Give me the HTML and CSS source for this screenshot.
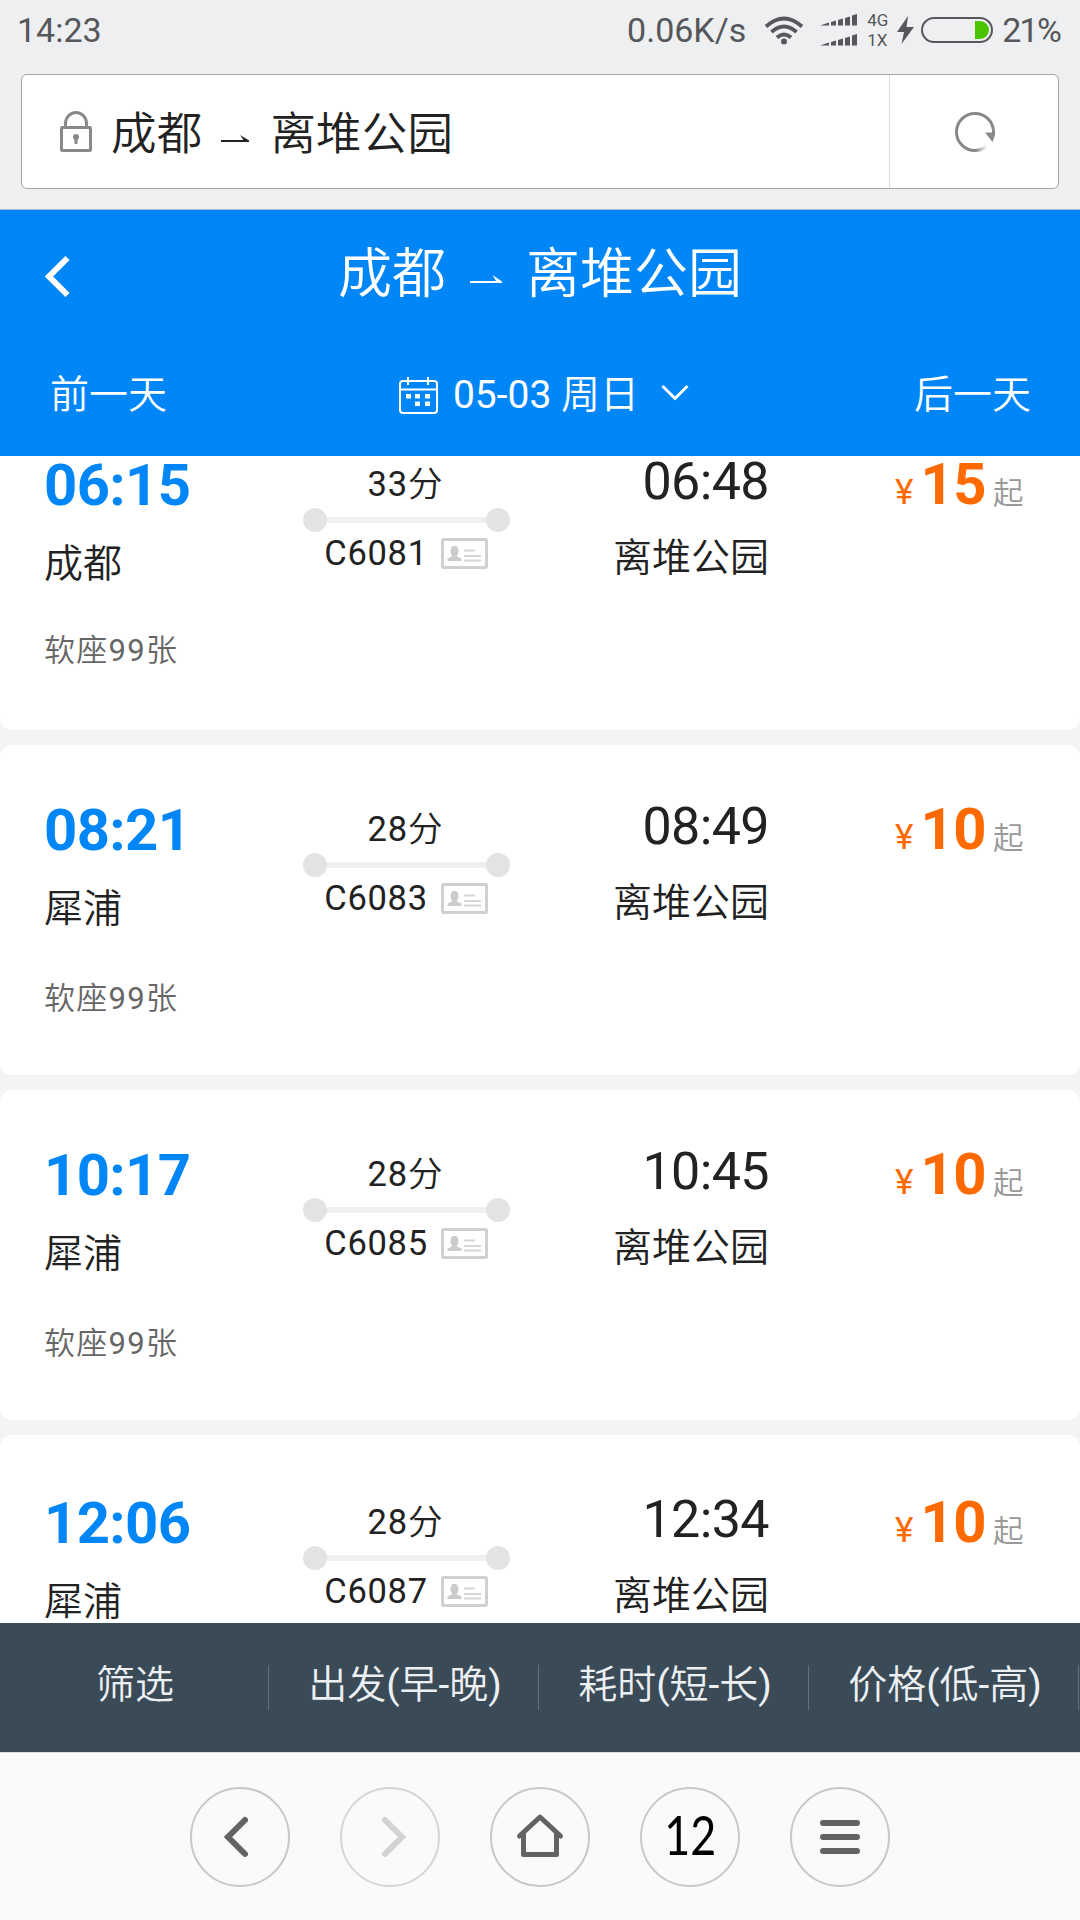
FILE: index.html
```html
<!DOCTYPE html>
<html lang="zh-CN">
<head>
<meta charset="utf-8">
<title>成都 - 离堆公园</title>
<link rel="stylesheet" href="styles.css">
</head>
<body>
<div class="screen">
  <header class="status">
    <span class="clock">14:23</span>
    <div class="status-right">
      <span class="speed">0.06K/s</span>
      <svg class="wifi" width="40" height="29" viewBox="0 0 40 29" fill="none" stroke="#55575a" stroke-width="4"><path d="M2 10.500Q20 -5.500 38 10.500M7.500 16Q20 5 32.500 16M13 21.500Q20 15.500 27 21.500"/><circle cx="20" cy="25.500" r="3" fill="#55575a" stroke="none"/></svg>
      <svg class="signal" width="38" height="34" viewBox="0 0 38 34" fill="#55575a"><path d="M0 11.500L9 8.500V11.500ZM11 8L16 6.500V11.500H11ZM18 6L23 4.500V11.500H18ZM25 4L30 2.500V11.500H25ZM32 1.500L37 0V11.500H32Z"/><path d="M0 31.500L9 28.500V31.500ZM11 28L16 26.500V31.500H11ZM18 26L23 24.500V31.500H18ZM25 24L30 22.500V31.500H25ZM32 21.500L37 20V31.500H32Z"/></svg>
      <div class="net"><span>4G</span><span>1X</span></div>
      <svg class="bolt" width="17" height="28" viewBox="0 0 17 28" fill="#55575a"><path d="M11 0L0 16H7L4.500 28L17 11H9.500Z"/></svg>
      <svg class="battery" width="72" height="26" viewBox="0 0 72 26"><rect x="1" y="1" width="70" height="24" rx="12" fill="none" stroke="#55575a" stroke-width="2"/><path d="M54 4H59A9 9 0 0 1 59 22H54Z" fill="#4bc400"/></svg>
      <span class="percent">21%</span>
    </div>
  </header>

  <div class="address">
    <div class="address-main">
      <svg class="lock" width="32" height="41" viewBox="0 0 32 41" fill="none" stroke="#898989" stroke-width="3"><rect x="1.500" y="16.500" width="29" height="23" rx="1"/><path d="M5.500 16V12.500A10.500 11 0 0 1 26.500 12.500V16"/><g fill="#898989" stroke="none"><circle cx="16" cy="26" r="3"/><rect x="14.500" y="27" width="3" height="6"/></g></svg>
      <span class="place">成都</span>
      <svg class="arrow-s" width="28" height="8" viewBox="0 0 28 8"><path d="M0 5H22.500L19 0L28 5.500V7H0Z" fill="#222"/></svg>
      <span class="place">离堆公园</span>
    </div>
    <div class="address-reload">
      <svg width="42" height="42" viewBox="0 0 42 42"><defs><linearGradient id="fade" gradientUnits="userSpaceOnUse" x1="22" y1="0" x2="33" y2="0"><stop stop-color="#898989"/><stop offset="1" stop-color="#898989" stop-opacity="0"/></linearGradient></defs><path d="M21 39.500A18.500 18.500 0 1 1 39.500 21V24" fill="none" stroke="#898989" stroke-width="3"/><path d="M21 39.500A18.500 18.500 0 0 0 33 35" fill="none" stroke="url(#fade)" stroke-width="3"/><path d="M31 21.500H41V24L38.500 31Z" fill="#898989"/></svg>
    </div>
  </div>

  <section class="head">
    <div class="title-row">
      <svg class="back" width="26" height="43" viewBox="0 0 26 43"><path d="M22.500 3L4 21.500L22.500 40" fill="none" stroke="#fff" stroke-width="6"/></svg>
      <h1 class="title"><span>成都</span><svg class="arrow-l" width="32" height="9" viewBox="0 0 32 9"><path d="M0 6H26L22.500 0L32 6.500V8H0Z" fill="#fff"/></svg><span>离堆公园</span></h1>
    </div>
    <div class="date-row">
      <span class="day">前一天</span>
      <div class="date">
        <svg class="cal" width="39" height="37" viewBox="0 0 39 37" fill="none" stroke="#fff" stroke-width="2"><rect x="1" y="4" width="37" height="32" rx="3"/><path d="M1 12.500H38M9 0V8M29 0V8"/><g fill="#fff" stroke="none"><path d="M7 17h5v4.500h-5zM16 17h5v4.500h-5zM26 17h5v4.500h-5zM16 24.500h5v4.500h-5zM26 24.500h5v4.500h-5z"/></g></svg>
        <span class="date-text">05-03 周日</span>
        <svg class="down" width="28" height="18" viewBox="0 0 28 18"><path d="M1.500 2L14 14.500L26.500 2" fill="none" stroke="#fff" stroke-width="3"/></svg>
      </div>
      <span class="day">后一天</span>
    </div>
  </section>

  <main class="list">
    <article class="card card-first">
      <div class="from"><b class="time">06:15</b><span class="station">成都</span></div>
      <div class="trip"><span class="dur">33分</span><div class="track"><i></i><u></u><i></i></div><div class="train"><span>C6081</span><svg class="idcard" width="47" height="31" viewBox="0 0 47 31"><use href="#idcard"/></svg></div></div>
      <div class="to"><span class="arrive">06:48</span><span class="station">离堆公园</span></div>
      <div class="price"><span class="yen">¥</span><b>15</b><span class="qi">起</span></div>
      <div class="seats">软座99张</div>
    </article>
    <article class="card">
      <div class="from"><b class="time">08:21</b><span class="station">犀浦</span></div>
      <div class="trip"><span class="dur">28分</span><div class="track"><i></i><u></u><i></i></div><div class="train"><span>C6083</span><svg class="idcard" width="47" height="31" viewBox="0 0 47 31"><use href="#idcard"/></svg></div></div>
      <div class="to"><span class="arrive">08:49</span><span class="station">离堆公园</span></div>
      <div class="price"><span class="yen">¥</span><b>10</b><span class="qi">起</span></div>
      <div class="seats">软座99张</div>
    </article>
    <article class="card">
      <div class="from"><b class="time">10:17</b><span class="station">犀浦</span></div>
      <div class="trip"><span class="dur">28分</span><div class="track"><i></i><u></u><i></i></div><div class="train"><span>C6085</span><svg class="idcard" width="47" height="31" viewBox="0 0 47 31"><use href="#idcard"/></svg></div></div>
      <div class="to"><span class="arrive">10:45</span><span class="station">离堆公园</span></div>
      <div class="price"><span class="yen">¥</span><b>10</b><span class="qi">起</span></div>
      <div class="seats">软座99张</div>
    </article>
    <article class="card card-last">
      <div class="from"><b class="time">12:06</b><span class="station">犀浦</span></div>
      <div class="trip"><span class="dur">28分</span><div class="track"><i></i><u></u><i></i></div><div class="train"><span>C6087</span><svg class="idcard" width="47" height="31" viewBox="0 0 47 31"><use href="#idcard"/></svg></div></div>
      <div class="to"><span class="arrive">12:34</span><span class="station">离堆公园</span></div>
      <div class="price"><span class="yen">¥</span><b>10</b><span class="qi">起</span></div>
    </article>
  </main>

  <nav class="filters">
    <span>筛选</span><span>出发(早-晚)</span><span>耗时(短-长)</span><span>价格(低-高)</span>
  </nav>

  <footer class="toolbar">
    <div class="round"><svg width="100" height="100" viewBox="0 0 100 100"><path d="M55 33L38 50L55 67" fill="none" stroke="#636363" stroke-width="6" stroke-linecap="round"/></svg></div>
    <div class="round round-off"><svg width="100" height="100" viewBox="0 0 100 100"><path d="M45 33L62 50L45 67" fill="none" stroke="#d3d3d3" stroke-width="6" stroke-linecap="round"/></svg></div>
    <div class="round"><svg width="100" height="100" viewBox="0 0 100 100" fill="none" stroke="#636363" stroke-width="5" stroke-linejoin="round" stroke-linecap="round"><path d="M29.500 49L50 30L70.500 49M33.500 47V67.500H66.500V47"/></svg></div>
    <div class="round"><span class="tabs">12</span></div>
    <div class="round"><svg width="100" height="100" viewBox="0 0 100 100"><path d="M33 36H67M33 50H67M33 64H67" stroke="#636363" stroke-width="6" stroke-linecap="round"/></svg></div>
  </footer>
</div>
<svg class="defs" width="0" height="0"><defs><g id="idcard"><rect x="1.500" y="1.500" width="44" height="28" rx="1" fill="none" stroke="#d0d0d0" stroke-width="3"/><path d="M13.500 8c3 0 4 2 4 5s-1 3-1.500 4.500v1l4.500 2v2.500h-14v-2.500l4.500-2v-1c-.5-1.500-1.500-1.500-1.500-4.500s1-5 4-5z" fill="#ccc"/><path d="M23 12.500h11M23 18h17M23 22.500h17" stroke="#d6d6d6" stroke-width="2"/></g></defs></svg>
</body>
</html>
```
FILE: styles.css
```css
* { box-sizing: border-box; }
body { margin: 0; font-family: Roboto, "Noto Sans CJK SC DemiLight", "Noto Sans CJK SC", sans-serif; color: #222; }
svg { display: block; flex: none; }
.defs { position: absolute; }
.screen { width: 1080px; height: 1920px; display: flex; flex-direction: column; overflow: hidden; background: #eeeff1; white-space: nowrap; }

.status { height: 74px; flex: none; display: flex; justify-content: space-between; padding: 9px 20px 0 17px; color: #55575a; font-size: 34px; line-height: 43px; }
.clock { letter-spacing: 0; }
.status-right { display: flex; align-items: flex-start; }
.speed { margin-right: 18px; }
.wifi { margin: 7px 16px 0 0; }
.signal { margin: 5px 9px 0 0; }
.net { display: flex; flex-direction: column; width: 21px; margin: 1px 9px 0 0; font-size: 17px; line-height: 20px; }
.bolt { margin: 7px 7px 0 0; }
.battery { margin: 8px 9px 0 0; }
.percent { letter-spacing: -1.8px; }

.address { height: 115px; flex: none; margin: 0 21px; display: flex; background: #fff; border: 1px solid #a3a5a7; border-radius: 6px; }
.address-main { width: 868px; display: flex; align-items: center; padding-left: 38px; border-right: 1px solid #dcdddf; font-size: 45.5px; color: #222; }
.place { padding-bottom: 3px; letter-spacing: 0.2px; }
.lock { margin-right: 19px; }
.arrow-s { margin: 14px 21px 0 19px; }
.address-reload { flex: 1; display: flex; align-items: center; justify-content: center; padding-left: 2px; }

.head { height: 247px; flex: none; margin-top: 20px; border-top: 1px solid #a9b9c9; background: #0086f6; color: #fff; }
.title-row { height: 127px; display: flex; align-items: center; padding-left: 45px; }
.back { margin-top: 5px; }
.title { display: flex; align-items: center; margin: 0 0 0 267px; padding-bottom: 9px; font-size: 54px; font-weight: 400; }
.arrow-l { margin: 20px 24px 0 24px; }
.date-row { display: flex; align-items: center; justify-content: space-between; padding: 0 49px 0 50px; height: 112px; font-size: 39px; }
.day { padding-bottom: 4px; }
.date { display: flex; align-items: center; padding-left: 7px; }
.cal { margin-top: 4px; }
.date-text { margin: 0 22px 0 15px; padding-bottom: 4px; }

.list { height: 1167px; flex: none; display: flex; flex-direction: column; gap: 15px; overflow: hidden; background: #f4f4f4; }
.card { height: 330px; flex: none; background: #fff; border-radius: 12px; padding: 56px 50px 0 44px; display: grid; grid-template-columns: 259px 207px 259px 1fr; grid-template-rows: 172px 60px; }
/* the list is scrolled, so the first card starts under the header */
.card-first { margin-top: -56px; grid-template-rows: 169px 60px; }
.card-last { padding-top: 59px; }
.from, .to { display: flex; flex-direction: column; gap: 25px; }
.time { font-size: 58px; line-height: 58px; color: #0086f6; letter-spacing: -0.6px; }
.station { font-size: 39px; line-height: 50px; }
.trip { display: flex; flex-direction: column; align-items: center; padding-top: 5px; }
.dur { font-size: 34.5px; line-height: 47px; letter-spacing: 0.9px; margin-right: 2px; }
.track { display: flex; align-items: center; }
.track i { width: 24px; height: 24px; border-radius: 50%; background: #e3e3e3; }
.track u { width: 159px; height: 6px; background: #efefef; }
.train { display: flex; align-items: center; gap: 13px; margin: 1px 1px 0 0; font-size: 34.5px; letter-spacing: 0.7px; }
.to { align-items: flex-end; }
.arrive { font-size: 52px; line-height: 52px; letter-spacing: -0.6px; }
.price { display: flex; align-items: baseline; padding-left: 126px; line-height: 57px; color: #ff6a00; }
.price b { font-size: 58px; letter-spacing: -0.5px; margin: 0 7px 0 7px; }
.yen { font-size: 35px; }
.qi { font-size: 30.5px; color: #999; }
.seats { grid-column: 1 / -1; font-size: 31px; letter-spacing: 1.3px; color: #666; }

.filters { height: 129px; flex: none; display: grid; grid-template-columns: repeat(4, 270px); background: #3b4a57; color: #ecf0f3; font-size: 39px; padding-top: 42px; }
.filters span { height: 45px; margin-right: 1px; padding: 0 0 13px 2px; display: flex; align-items: center; justify-content: center; border-right: 1px solid #61707b; }

.toolbar { flex: 1; display: flex; justify-content: center; align-items: flex-start; gap: 50px; padding-top: 34px; border-top: 1px solid #ddd; background: #fafafa; }
.round { width: 100px; height: 100px; border: 2px solid #c8c8c8; border-radius: 50%; display: flex; align-items: center; justify-content: center; }
.round-off { border-color: #d6d6d6; }
.tabs { font-family: Lato, sans-serif; font-size: 54px; color: #000; padding-bottom: 5px; transform: scaleX(0.83); }
```
